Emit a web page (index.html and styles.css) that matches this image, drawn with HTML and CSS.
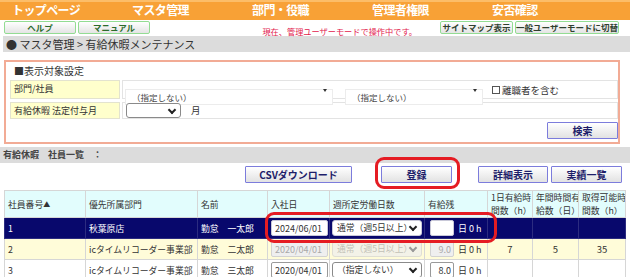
FILE: index.html
```html
<!DOCTYPE html>
<html lang="ja">
<head>
  <meta charset="UTF-8" />
  <meta name="viewport" content="width=device-width, initial-scale=1.0" />
  <title>有給休暇メンテナンス</title>
  <link rel="stylesheet" href="styles.css">
</head>
<body>
  <div class="topnav">
    <a href="#">トップページ</a>
    <a href="#">マスタ管理</a>
    <a href="#">部門・役職</a>
    <a href="#">管理者権限</a>
    <a href="#">安否確認</a>
  </div>

  <div class="subbar">
    <button class="gbtn help">ヘルプ</button>
    <button class="gbtn manual">マニュアル</button>
    <span class="notice">現在、管理ユーザーモードで操作中です。</span>
    <button class="gbtn sitemap">サイトマップ表示</button>
    <button class="gbtn usermode">一般ユーザーモードに切替</button>
  </div>

  <div class="crumb">● マスタ管理 &gt; 有給休暇メンテナンス</div>

  <div class="filter">
    <div class="filter-title">■表示対象設定</div>
    <div class="frow">
      <div class="flabel">部門/社員</div>
      <div class="fvalue">
        <span class="fsel dept"><select><option>（指定しない）</option></select></span>
        <span class="fsel emp"><select><option>（指定しない）</option></select></span>
        <label class="retired"><input type="checkbox" />離職者を含む</label>
      </div>
    </div>
    <div class="frow second">
      <div class="flabel">有給休暇 法定付与月</div>
      <div class="fvalue">
        <span class="csel month"><select><option></option></select></span>
        <span class="unit">月</span>
      </div>
    </div>
    <div class="search-row">
      <button class="pbtn search">検索</button>
    </div>
  </div>

  <div class="listbar">有給休暇　社員一覧　：</div>

  <div class="actions">
    <button class="pbtn csv">CSVダウンロード</button>
    <span class="marked"><button class="pbtn reg">登録</button></span>
    <button class="pbtn detail">詳細表示</button>
    <button class="pbtn result">実績一覧</button>
  </div>

  <div class="list-wrap">
    <table class="list">
      <colgroup>
        <col style="width:81px"><col style="width:112px"><col style="width:70px">
        <col style="width:62px"><col style="width:95px"><col style="width:63px">
        <col style="width:45px"><col style="width:46px"><col style="width:47px">
      </colgroup>
      <thead>
        <tr>
          <th>社員番号<span class="sort">▲</span></th>
          <th>優先所属部門</th>
          <th>名前</th>
          <th>入社日</th>
          <th>週所定労働日数</th>
          <th>有給残</th>
          <th>1日有給時<br>間数（h）</th>
          <th>年間時間有<br>給数（日）</th>
          <th>取得可能時<br>間数（h）</th>
        </tr>
      </thead>
      <tbody>
        <tr class="selected">
          <td>1</td>
          <td>秋葉原店</td>
          <td>勤怠　一太郎</td>
          <td class="c-date"><input class="date" type="text" value="2024/06/01" /></td>
          <td class="c-week"><span class="csel week"><select><option>通常（週5日以上）</option></select></span></td>
          <td class="c-rest"><input class="num" type="text" value="" /><span class="rest-unit">日 0 h</span></td>
          <td></td>
          <td></td>
          <td></td>
        </tr>
        <tr class="alt">
          <td>2</td>
          <td>icタイムリコーダー事業部</td>
          <td>勤怠　二太郎</td>
          <td class="c-date"><input class="date" type="text" value="2020/04/01" disabled /></td>
          <td class="c-week"><span class="csel week off"><select disabled><option>通常（週5日以上）</option></select></span></td>
          <td class="c-rest"><input class="num" type="text" value="9.0" disabled /><span class="rest-unit">日 0 h</span></td>
          <td class="ctr">7</td>
          <td class="ctr">5</td>
          <td class="ctr">35</td>
        </tr>
        <tr>
          <td>3</td>
          <td>icタイムリコーダー事業部</td>
          <td>勤怠　三太郎</td>
          <td class="c-date"><input class="date" type="text" value="2020/04/01" /></td>
          <td class="c-week"><span class="csel week"><select><option>（指定しない）</option></select></span></td>
          <td class="c-rest"><input class="num" type="text" value="8.0" /><span class="rest-unit">日 0 h</span></td>
          <td></td>
          <td></td>
          <td></td>
        </tr>
        <tr class="alt">
          <td></td>
          <td></td>
          <td></td>
          <td></td>
          <td></td>
          <td></td>
          <td></td>
          <td></td>
          <td></td>
        </tr>
      </tbody>
    </table>
    <div class="row-mark"></div>
  </div>
</body>
</html>
```

FILE: styles.css
```css
* {
  box-sizing: border-box;
}

html, body {
  margin: 0;
  overflow: hidden;
}

body {
  font-family: "Noto Sans CJK JP", "Noto Sans", sans-serif;
  color: #333;
  background: #fff;
  width: 630px;
  height: 277px;
}

button, input, select {
  font-family: inherit;
}

/* top menu */
.topnav {
  display: flex;
  height: 20px;
  background: #f8a136;
  border-top: 2px solid #fcbd68;
}

.topnav a {
  width: 120px;
  padding-left: 12px;
  color: white;
  font-size: 12px;
  font-weight: bold;
  line-height: 16px;
  letter-spacing: -0.6px;
  text-decoration: none;
}

/* help / mode bar */
.subbar {
  display: flex;
  align-items: flex-start;
  height: 16px;
  padding: 1px 11px 0 4px;
}

.gbtn {
  height: 13px;
  padding: 0;
  border: 1px solid #93dc93;
  border-radius: 2px;
  background: linear-gradient(#ffffff, #e4e4e4);
  color: #2b6b2b;
  font-size: 8.5px;
  font-weight: bold;
  line-height: 11px;
  text-align: center;
  cursor: pointer;
}

.help { width: 72px; }
.manual { width: 72px; margin-left: 2px; }
.sitemap { width: 73px; margin-left: 23px; color: #2f3f2f; }
.usermode { width: 104px; margin-left: 2px; color: #2f3f2f; }

.notice {
  margin-left: auto;
  margin-top: 6px;
  color: #e2184c;
  font-size: 8.2px;
  line-height: 9px;
}

.crumb {
  height: 16px;
  margin-left: 3px;
  padding-left: 3px;
  background: #dcdcdc;
  color: #333;
  font-size: 11px;
  line-height: 16px;
}

/* filter box */
.filter {
  width: 616px;
  height: 84px;
  margin: 8px 0 0 4px;
  padding: 2px 0 0 4px;
  border: 2px solid #f2ab95;
}

.filter-title {
  padding-left: 4px;
  font-size: 10px;
  line-height: 13px;
  color: #333;
}

.frow {
  display: grid;
  grid-template-columns: 110px 1fr;
  grid-template-rows: 19px;
  gap: 2px;
  margin-top: 3px;
}

.frow.second {
  grid-template-rows: 17px;
}

.flabel {
  padding-left: 3px;
  background: #ffffcc;
  border: 1px solid #e3e3cf;
  font-size: 9px;
  line-height: 15px;
  color: #333;
}

.fvalue {
  display: flex;
  align-items: center;
  padding-left: 2px;
  border: 1px solid #e3e3e3;
}

.fsel {
  position: relative;
  display: block;
  height: 16px;
}

.fsel select {
  width: 100%;
  height: 16px;
  padding: 0 0 0 6px;
  border: 1px solid #ececec;
  background: white;
  color: #444;
  font-size: 8.5px;
  appearance: none;
}

.fsel::after {
  content: "";
  position: absolute;
  right: 6px;
  top: 7px;
  border-top: 3px solid #333;
  border-left: 2px solid transparent;
  border-right: 2px solid transparent;
}

.dept { width: 208px; }
.emp { width: 138px; margin-left: 12px; }

.retired {
  display: flex;
  align-items: center;
  margin-left: 9px;
  font-size: 9.5px;
  color: #333;
}

.retired input {
  width: 8px;
  height: 8px;
  margin: 0 2px 0 0;
  border: 1px solid #555;
  background: white;
  appearance: none;
}

/* chevron select used in filter and table */
.csel {
  position: relative;
  display: block;
}

.csel select {
  display: block;
  width: 100%;
  height: 100%;
  padding: 0 0 0 4px;
  border: 1px solid #8a8a8a;
  border-radius: 3px;
  background: white;
  color: #333;
  font-size: 8.8px;
  line-height: 12px;
  appearance: none;
}

.csel::after {
  content: "";
  position: absolute;
  right: 6px;
  top: 50%;
  width: 4px;
  height: 4px;
  margin-top: -4px;
  border-right: 2px solid #222;
  border-bottom: 2px solid #222;
  transform: rotate(45deg);
}

.month {
  width: 55px;
  height: 15px;
  margin-left: 1px;
}

.unit {
  margin-left: 10px;
  font-size: 9.5px;
  line-height: 13px;
}

.search-row {
  display: flex;
  justify-content: flex-end;
  margin-top: 3px;
}

/* purple buttons */
.pbtn {
  height: 17px;
  padding: 0;
  border: 1px solid #7c7cdc;
  border-radius: 1px;
  background: linear-gradient(#ffffff, #e2e2e2);
  color: #1e1e6a;
  font-size: 10px;
  font-weight: bold;
  line-height: 15px;
  text-align: center;
  cursor: pointer;
}

.search { width: 71px; }

.listbar {
  height: 16px;
  margin-top: 3px;
  padding-left: 3px;
  background: #dcdcdc;
  color: #444;
  font-size: 9px;
  font-weight: bold;
  line-height: 16px;
}

.actions {
  display: flex;
  align-items: flex-start;
  height: 27px;
  padding: 3px 0 0 245px;
}

.csv { width: 107px; }

.marked {
  position: relative;
  margin-left: 29px;
}

.marked::after {
  content: "";
  position: absolute;
  left: -6px;
  right: -8px;
  top: -9px;
  bottom: -6px;
  border: 3px solid #e51c23;
  border-radius: 9px;
}

.reg { width: 71px; display: block; }
.detail { width: 70px; margin-left: 26px; }
.result { width: 71px; margin-left: 3px; }

/* employee list */
.list-wrap {
  position: relative;
  width: 621px;
  margin-left: 4px;
}

.list {
  width: 621px;
  border-collapse: collapse;
  table-layout: fixed;
  font-size: 8.8px;
}

.list th,
.list td {
  padding: 0 3px;
  border: 1px solid #d6d6d6;
  text-align: left;
  font-weight: normal;
  white-space: nowrap;
  overflow: hidden;
}

.list th {
  height: 27px;
  background: #e2fdfd;
  line-height: 13px;
  color: #333;
}

.sort {
  font-size: 7px;
  vertical-align: 1px;
}

.list td {
  height: 21px;
  line-height: 13px;
  color: #333;
}

.list tr.alt td {
  background: #fffcd9;
}

.list tr.selected td {
  background: #08086c;
  border-color: #2c2c80;
  color: white;
}

.list td.ctr {
  text-align: center;
  font-size: 9.5px;
}

.list td.c-date { padding-left: 3px; }
.list td.c-week { padding-left: 2px; }
.list td.c-rest { padding-left: 5px; }

.date {
  display: block;
  width: 57px;
  height: 16px;
  padding: 0 3px;
  border: 1px solid #999;
  border-radius: 2px;
  background: white;
  color: #333;
  font-size: 9px;
}

.week {
  width: 90px;
  height: 16px;
}

.num {
  width: 24px;
  height: 16px;
  padding: 0 2px;
  border: 1px solid #999;
  border-radius: 2px;
  background: white;
  color: #333;
  font-size: 9px;
  text-align: right;
  vertical-align: middle;
}

.rest-unit {
  margin-left: 4px;
  font-size: 9px;
  vertical-align: middle;
}

.list input:disabled,
.off select {
  background: #efefef;
  border-color: #d2d2d2;
  color: #a8a8a8;
}

.off::after {
  border-color: #999;
}

.selected .date,
.selected .num,
.selected .week select {
  border-color: #c8c8d8;
}

.row-mark {
  position: absolute;
  left: 261px;
  top: 22px;
  width: 232px;
  height: 31px;
  border: 3px solid #e51c23;
  border-radius: 9px;
}
```
